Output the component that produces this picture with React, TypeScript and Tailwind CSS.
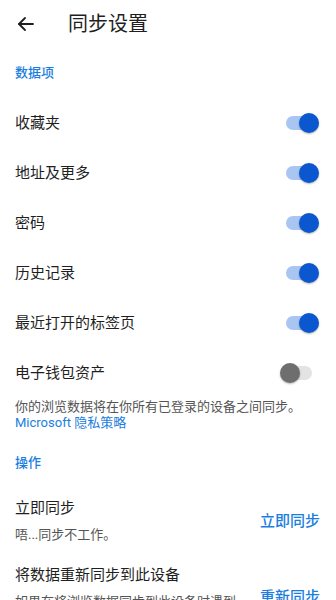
import React from 'react'

const font = { fontFamily: 'Roboto, "Noto Sans CJK SC", sans-serif' }

const dataItems = [
  { label: '收藏夹', on: true },
  { label: '地址及更多', on: true },
  { label: '密码', on: true },
  { label: '历史记录', on: true },
  { label: '最近打开的标签页', on: true },
  { label: '电子钱包资产', on: false },
]

function Toggle({ on }: { on: boolean }) {
  return (
    <div className="relative w-[40px] h-5 shrink-0">
      <div
        className={`absolute left-[7px] top-[3px] w-[26px] h-[14px] rounded-full ${
          on ? 'bg-[#a9c5f2]' : 'bg-[#e3e3e3]'
        }`}
      />
      <div
        className={`absolute top-0 w-5 h-5 rounded-full shadow-[0_1px_2px_rgba(0,0,0,0.3)] ${
          on ? 'right-0 bg-[#0b57d0]' : 'left-[1px] bg-[#6e6e6e]'
        }`}
      />
    </div>
  )
}

function SectionHeader({ children }: { children: React.ReactNode }) {
  return (
    <div className="h-[50px] flex items-center px-[15px] text-[13px] font-medium text-[#1a7ee0]">
      {children}
    </div>
  )
}

export default function App() {
  return (
    <div className="w-[336px] h-[600px] overflow-hidden bg-white text-[#1f1f1f]" style={font}>
      {/* Header */}
      <div className="h-12 flex items-center">
        <svg
          className="ml-[14px] w-6 h-6"
          viewBox="0 0 24 24"
          fill="none"
          stroke="#1f1f1f"
          strokeWidth="1.8"
          strokeLinecap="round"
          strokeLinejoin="round"
        >
          <path d="M19 12H5" />
          <path d="M11 6l-6 6 6 6" />
        </svg>
        <h1 className="ml-[30px] text-[20px] leading-6 font-normal">同步设置</h1>
      </div>

      <SectionHeader>数据项</SectionHeader>

      {dataItems.map(item => (
        <div key={item.label} className="h-[50px] flex items-center justify-between pl-[15px] pr-[17px]">
          <span className="text-[15px]">{item.label}</span>
          <Toggle on={item.on} />
        </div>
      ))}

      {/* Description */}
      <div className="px-[15px] pt-px pb-[7px] text-[13px] leading-4">
        <p className="text-[#555]">你的浏览数据将在你所有已登录的设备之间同步。</p>
        <p className="text-[#1a7ee0]">Microsoft 隐私策略</p>
      </div>

      <SectionHeader>操作</SectionHeader>

      {/* Actions */}
      <div className="flex items-center justify-between pl-[15px] pr-4 pt-[10px] pb-[11px]">
        <div>
          <div className="text-[15px] leading-5">立即同步</div>
          <div className="mt-2 text-[13px] leading-[18px] text-[#555]">唔...同步不工作。</div>
        </div>
        <span className="text-[15px] font-medium text-[#1a7ee0]">立即同步</span>
      </div>
      <div className="flex items-center justify-between gap-4 pl-[15px] pr-4 pt-[10px]">
        <div className="min-w-0">
          <div className="text-[15px] leading-5">将数据重新同步到此设备</div>
          <div className="mt-2 text-[13px] leading-[18px] text-[#555]">如果在将浏览数据同步到此设备时遇到问题，请尝试重新同步。</div>
        </div>
        <span className="shrink-0 text-[15px] font-medium text-[#1a7ee0]">重新同步</span>
      </div>
    </div>
  )
}
